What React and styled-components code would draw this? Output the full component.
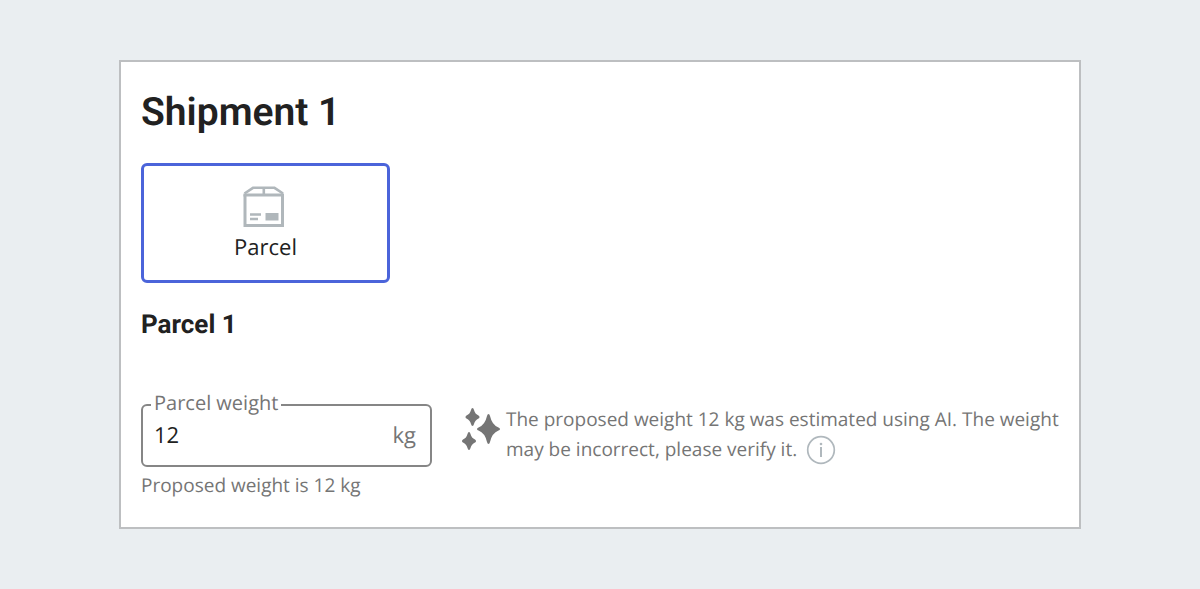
import React from "react";
import styled, { createGlobalStyle } from "styled-components";

const GlobalStyle = createGlobalStyle`
  *, *::before, *::after { box-sizing: border-box; }
  body {
    margin: 0;
    background: #eaeef1;
    color: #212121;
    font-family: "Open Sans", sans-serif;
    text-rendering: geometricPrecision;
  }
`;

const Page = styled.main`
  min-height: 100vh;
  padding: 60px 10%;
`;

const Card = styled.section`
  margin: 0 -1px;
  padding: 20px 12px 28px 20px;
  background: #ffffff;
  border: 2px solid #bdbfc1;
`;

const Title = styled.h1`
  margin: 0;
  font: 600 39px/60px Roboto, sans-serif;
`;

const Subtitle = styled.h2`
  margin: 24px 0 48px;
  font: 700 26px/36px Roboto, sans-serif;
`;

const TypeButton = styled.button`
  display: flex;
  flex-direction: column;
  align-items: center;
  gap: 4px;
  width: 249px;
  margin-top: 21px;
  padding: 20px 20px 18px;
  background: #ffffff;
  border: 3px solid #4b64da;
  border-radius: 6px;
  color: inherit;
  font: 400 22px/30px "Open Sans", sans-serif;
  text-rendering: inherit;
`;

const Row = styled.div`
  display: flex;
  align-items: flex-start;
  gap: 30px;
`;

const Field = styled.div`
  flex: 0 0 291px;
  min-width: 0;
`;

const Outline = styled.fieldset`
  display: flex;
  align-items: center;
  min-width: 0;
  margin: 0;
  padding: 0 14px 14px 8px;
  border: 2px solid #868686;
  border-radius: 6px;
`;

const Legend = styled.legend`
  padding: 0 3px 4px;
  color: #757575;
  font-size: 20px;
  line-height: 24px;
`;

const Input = styled.input`
  flex: 1;
  min-width: 0;
  width: 100%;
  height: 32px;
  padding: 0 3px;
  background: transparent;
  border: 0;
  outline: 0;
  color: inherit;
  font: 400 22px/32px "Open Sans", sans-serif;
  text-rendering: inherit;
`;

const Unit = styled.span`
  color: #757575;
  font-size: 22px;
  line-height: 32px;
`;

const Hint = styled.p`
  margin: 4px 0 0;
  color: #757575;
  font-size: 19px;
  line-height: 28px;
`;

const Notice = styled.div`
  display: flex;
  flex: 1;
  align-items: flex-start;
  gap: 6px;
  padding-top: 13px;
  color: #757575;
`;

const NoticeText = styled.p`
  margin: 0;
  font-size: 19px;
  line-height: 30px;
`;

const InfoButton = styled.button`
  display: inline-flex;
  height: 30px;
  margin-left: 4px;
  padding: 1px 0 0;
  background: none;
  border: 0;
  color: #b0b8bd;
  vertical-align: top;
`;

const SparklesSlot = styled.span`
  display: flex;
  flex: none;
  padding-top: 4px;
`;

const ParcelIcon = () => (
  <svg width="45" height="42" viewBox="0 0 45 42" fill="none" stroke="#b0b7bb" aria-hidden="true">
    <path d="M2 8.5V39.500H39.500V8.5" strokeWidth="3" />
    <path d="M1.5 7.500L10 1.800H31.500L40 7.500" strokeWidth="2.6" />
    <path d="M.5 9H41" strokeWidth="3" />
    <path d="M20.800 2V9" strokeWidth="2.6" />
    <path d="M7 28.500H18M7 33H15" strokeWidth="2.6" />
    <path d="M22.500 27H35.500V34.500H22.500Z" fill="#b0b7bb" stroke="none" />
  </svg>
);

const SparklesIcon = () => (
  <svg width="38" height="43" viewBox="0 0 38 43" fill="currentColor" aria-hidden="true">
    <path d="M10.500 0Q11.500 0 12 2Q13 6 16.500 7.500Q17.500 8 17.500 9Q17.500 10 16.500 10.500Q13 12 12 16Q11.500 18 10.500 18Q9.500 18 9 16Q8 12 4.500 10.500Q3.500 10 3.500 9Q3.500 8 4.500 7.500Q8 6 9 2Q9.500 0 10.500 0Z" />
    <path d="M7 24Q8 24 8.500 26Q9.500 30 13 31.500Q14 32 14 33Q14 34 13 34.500Q9.500 36 8.500 40Q8 42 7 42Q6 42 5.500 40Q4.500 36 1 34.500Q0 34 0 33Q0 32 1 31.500Q4.500 30 5.500 26Q6 24 7 24Z" />
    <path d="M26.500 6Q27.500 6 28 8Q30 17 36.500 19.500Q38 20 38 21Q38 22 36.500 22.500Q30 25 28 34Q27.500 36 26.500 36Q25.500 36 25 34Q23 25 16.500 22.500Q15 22 15 21Q15 20 16.500 19.500Q23 17 25 8Q25.500 6 26.500 6Z" />
  </svg>
);

const InfoIcon = () => (
  <svg width="30" height="30" viewBox="0 0 30 30" fill="none" stroke="currentColor" aria-hidden="true">
    <circle cx="15" cy="15" r="13.300" strokeWidth="1.700" />
    <path d="M15 12V22" strokeWidth="2" />
    <circle cx="15" cy="9" r="1.300" fill="currentColor" stroke="none" />
  </svg>
);

export default function App() {
  return (
    <>
      <GlobalStyle />
      <Page>
        <Card>
          <Title>Shipment 1</Title>
          <TypeButton type="button" aria-pressed="true">
            <ParcelIcon />
            Parcel
          </TypeButton>
          <Subtitle>Parcel 1</Subtitle>
          <Row>
            <Field>
              <Outline>
                <Legend>
                  <label htmlFor="weight">Parcel weight</label>
                </Legend>
                <Input id="weight" inputMode="decimal" defaultValue="12" aria-describedby="weight-hint" />
                <Unit>kg</Unit>
              </Outline>
              <Hint id="weight-hint">Proposed weight is 12 kg</Hint>
            </Field>
            <Notice>
              <SparklesSlot>
                <SparklesIcon />
              </SparklesSlot>
              <NoticeText>
                The proposed weight 12 kg was estimated using AI. The weight may be incorrect, please verify it.{" "}
                <InfoButton type="button" aria-label="About the estimate">
                  <InfoIcon />
                </InfoButton>
              </NoticeText>
            </Notice>
          </Row>
        </Card>
      </Page>
    </>
  );
}
